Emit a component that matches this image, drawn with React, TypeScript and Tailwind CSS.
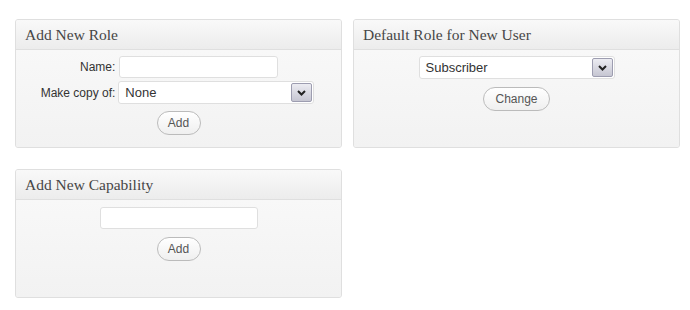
import React from "react";

const sans = { fontFamily: '"Liberation Sans", Arial, sans-serif' };

function Panel({ title, children }: { title: string; children: React.ReactNode }) {
  return (
    <div className="w-[327px] h-[129px] border border-[#dfdfdf] rounded-[3px] bg-[#f5f5f5] flex flex-col overflow-hidden">
      <div className="h-[30px] shrink-0 border-b border-[#dfdfdf] bg-gradient-to-b from-[#f9f9f9] to-[#ececec] flex items-center pl-[9px]">
        <span className="text-[15.5px] text-[#464646]" style={{ fontFamily: '"Liberation Serif", Georgia, serif' }}>
          {title}
        </span>
      </div>
      <div className="flex-1 bg-gradient-to-b from-[#f8f8f8] to-[#f2f2f2]">{children}</div>
    </div>
  );
}

function Arrow() {
  return (
    <div className="w-[21px] h-[19px] border border-[#9d9db0] rounded-[2px] bg-gradient-to-b from-[#ececf2] to-[#c6c6d2] flex items-center justify-center">
      <svg width="9" height="6" viewBox="0 0 9 6">
        <path d="M1 1 L4.5 4.5 L8 1" stroke="#222" strokeWidth="2" fill="none" />
      </svg>
    </div>
  );
}

function Select({ value, width }: { value: string; width: number }) {
  return (
    <div
      className="h-[23px] border border-[#dfdfdf] rounded-[3px] bg-white flex items-center justify-between pl-[6px] pr-[1px]"
      style={{ width }}
    >
      <span className="text-[13px] text-[#333]" style={sans}>{value}</span>
      <Arrow />
    </div>
  );
}

function Button({ label, width }: { label: string; width: number }) {
  return (
    <div
      className="h-[24px] rounded-full border border-[#bbbbbb] bg-gradient-to-b from-[#ffffff] to-[#efefef] flex items-center justify-center text-[12px] text-[#555]"
      style={{ ...sans, width }}
    >
      {label}
    </div>
  );
}

export default function App() {
  return (
    <div className="w-[690px] h-[310px] bg-white pl-[15px] pt-[19px]">
      <div className="grid grid-cols-[327px_327px] gap-x-[11px] gap-y-[21px]">
        <Panel title="Add New Role">
          <div className="flex flex-col items-center pt-[6px]">
            <div className="grid grid-cols-[auto_auto] items-center gap-x-[3px] gap-y-[3px] ml-[-2px]">
              <span className="text-[12px] text-[#333] text-right" style={sans}>Name:</span>
              <div className="h-[22px] w-[159px] border border-[#dfdfdf] rounded-[3px] bg-white ml-[1px]" />
              <span className="text-[12px] text-[#333] text-right" style={sans}>Make copy of:</span>
              <Select value="None" width={196} />
            </div>
            <div className="mt-[7px]">
              <Button label="Add" width={44} />
            </div>
          </div>
        </Panel>
        <Panel title="Default Role for New User">
          <div className="flex flex-col items-center pt-[6px]">
            <Select value="Subscriber" width={196} />
            <div className="mt-[8px]">
              <Button label="Change" width={67} />
            </div>
          </div>
        </Panel>
        <Panel title="Add New Capability">
          <div className="flex flex-col items-center pt-[7px]">
            <div className="h-[22px] w-[158px] border border-[#dfdfdf] rounded-[3px] bg-white" />
            <div className="mt-[8px]">
              <Button label="Add" width={44} />
            </div>
          </div>
        </Panel>
      </div>
    </div>
  );
}
